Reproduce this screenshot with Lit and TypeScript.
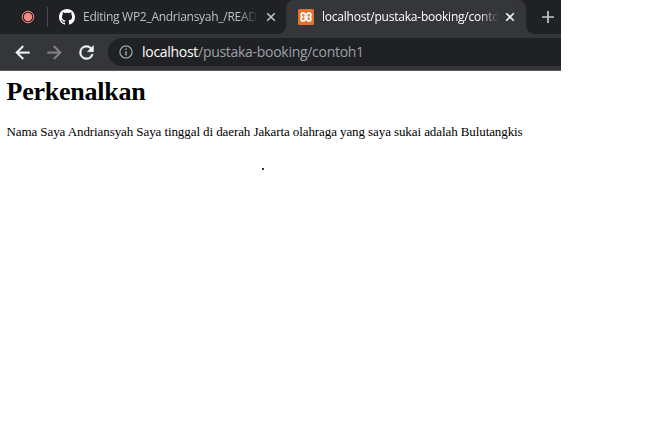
import { LitElement, html, css, svg } from "lit";
import { customElement } from "lit/decorators.js";

const close = html`<svg class="close" width="10" height="10" viewBox="0 0 10 10">
  <path d="M1.2 1.2 8.8 8.8M8.8 1.2 1.2 8.8" fill="none" stroke="currentColor" stroke-width="1.6" />
</svg>`;

const arrow = svg`<path d="M20 11H7.83l5.59-5.59L12 4l-8 8 8 8 1.41-1.41L7.83 13H20v-2z" fill="currentColor" stroke="currentColor" stroke-width=".4"/>`;

@customElement("browser-tabs")
class BrowserTabs extends LitElement {
  static styles = css`
    :host { display: flex; height: 34px; background: #202124; font: 12px/34px "Open Sans", "Noto Sans", sans-serif; color: #bdc1c6; }
    svg { display: block; flex: none; }
    .pinned { width: 47px; display: flex; align-items: center; box-sizing: border-box; padding-left: 21px; }
    .divider { width: 1px; height: 20px; margin-top: 7px; background: #4a4c50; flex: none; }
    .tab { display: flex; align-items: center; box-sizing: border-box; flex: none; }
    .idle { width: 238px; padding-left: 11px; }
    .active { position: relative; width: 240px; padding-left: 12px; background: #35363a; border-radius: 8px 8px 0 0; color: #fff; }
    .active::before, .active::after { content: ""; position: absolute; bottom: 0; width: 8px; height: 8px; }
    .active::before { left: -8px; background: radial-gradient(circle at 0 0, #202124 7.5px, #35363a 8px); }
    .active::after { right: -8px; background: radial-gradient(circle at 100% 0, #202124 7.5px, #35363a 8px); }
    .title { white-space: nowrap; overflow: hidden; flex: none; -webkit-mask-image: linear-gradient(90deg, #000 calc(100% - 20px), transparent); }
    .idle .title { width: 175px; margin-left: 8px; letter-spacing: -0.28px; }
    .active .title { width: 177px; margin-left: 8px; letter-spacing: -0.22px; }
    .close { margin-left: 8px; }
    .active .close { margin-left: 6px; color: #f1f3f4; }
    .add { margin: 11px 0 0 16px; }
  `;
  render() {
    return html`
      <div class="pinned">
        <svg width="14" height="14" viewBox="0 0 14 14">
          <circle cx="7" cy="7" r="5.8" fill="none" stroke="#f28b82" stroke-width="1" />
          <circle cx="7" cy="7" r="4.2" fill="#f28b82" />
        </svg>
      </div>
      <div class="divider"></div>
      <div class="tab idle">
        <svg width="16" height="16" viewBox="0 0 16 16"><path fill="#fff" d="M8 0C3.58 0 0 3.58 0 8c0 3.54 2.29 6.53 5.47 7.59.4.07.55-.17.55-.38 0-.19-.01-.82-.01-1.49-2.01.37-2.53-.49-2.69-.94-.09-.23-.48-.94-.82-1.13-.28-.15-.68-.52-.01-.53.63-.01 1.08.58 1.23.82.72 1.21 1.87.87 2.33.66.07-.52.28-.87.51-1.07-1.78-.2-3.64-.89-3.64-3.95 0-.87.31-1.59.82-2.15-.08-.2-.36-1.02.08-2.12 0 0 .67-.21 2.2.82.64-.18 1.32-.27 2-.27s1.36.09 2 .27c1.53-1.04 2.2-.82 2.2-.82.44 1.1.16 1.92.08 2.12.51.56.82 1.27.82 2.15 0 3.07-1.87 3.75-3.65 3.95.29.25.54.73.54 1.48 0 1.07-.01 1.93-.01 2.2 0 .21.15.46.55.38A8.01 8.01 0 0 0 16 8c0-4.42-3.58-8-8-8z" /></svg>
        <span class="title">Editing WP2_Andriansyah_/README</span>
        ${close}
      </div>
      <div class="tab active">
        <svg width="16" height="16" viewBox="0 0 16 16">
          <rect width="16" height="16" rx="1.5" fill="#e8702a" />
          <path d="M5.200 4C7 4 7.200 6 8 6S9 4 10.800 4C13.200 4 13.500 6.800 12 8c1.500 1.200 1.200 4-1.200 4C9 12 8.800 10 8 10S7 12 5.200 12C2.800 12 2.500 9.200 4 8 2.500 6.800 2.800 4 5.200 4z" fill="none" stroke="#fff" stroke-width="1.800" />
          <path d="M5.600 6.700 10.400 9.300M10.400 6.700 5.600 9.300" stroke="#fff" stroke-width="1.200" />
        </svg>
        <span class="title">localhost/pustaka-booking/contoh1</span>
        ${close}
      </div>
      <svg class="add" width="12" height="12" viewBox="0 0 12 12"><path d="M6 0V12M0 6H12" stroke="#c5c7ca" stroke-width="1.700" /></svg>
    `;
  }
}

@customElement("browser-toolbar")
class BrowserToolbar extends LitElement {
  static styles = css`
    :host { display: flex; align-items: center; height: 37px; box-sizing: border-box; padding-left: 11.5px; background: #35363a; border-bottom: 1px solid #5a585c; color: #f1f3f4; }
    svg { display: block; flex: none; }
    .nav { display: flex; gap: 11px; width: 96.5px; }
    .forward { transform: scaleX(-1); color: #828387; }
    .address { flex: 1; height: 28px; display: flex; align-items: center; box-sizing: border-box; padding-left: 11px; border-radius: 14px 0 0 14px; background: #202124; font: 14px/28px "Open Sans", "Noto Sans", sans-serif; color: #9aa0a6; white-space: nowrap; }
    .url { margin-left: 9px; letter-spacing: -0.29px; }
    .host { color: #fff; }
  `;
  render() {
    return html`
      <div class="nav">
        <svg width="21" height="21" viewBox="0 0 24 24">${arrow}</svg>
        <svg class="forward" width="21" height="21" viewBox="0 0 24 24">${arrow}</svg>
        <svg width="21" height="21" viewBox="0 0 24 24"><path d="M17.650 6.350A7.960 7.960 0 0 0 12 4a8 8 0 1 0 7.730 10h-2.080A6 6 0 1 1 12 6c1.660 0 3.140.69 4.220 1.780L13 11h7V4l-2.350 2.350z" fill="currentColor" stroke="currentColor" stroke-width=".5" /></svg>
      </div>
      <div class="address">
        <svg width="14" height="14" viewBox="0 0 14 14"><circle cx="7" cy="7" r="6.100" fill="none" stroke="#9aa0a6" stroke-width="1.300" /><path d="M7 6.200V10.400M7 3.500V5" stroke="#9aa0a6" stroke-width="1.500" /></svg>
        <span class="url"><span class="host">localhost</span>/pustaka-booking/contoh1</span>
      </div>
    `;
  }
}

@customElement("app-root")
class AppRoot extends LitElement {
  static styles = css`
    :host { display: block; height: 425px; background: #fff; overflow: hidden; }
    .browser { width: 561px; }
    .page { padding: 6px 0 0 6.5px; color: #000; font-family: "Liberation Serif", "Times New Roman", serif; }
    h1 { margin: 0; font-size: 26px; line-height: 30px; letter-spacing: -0.24px; }
    p { margin: 17px 0 0; font-size: 13px; line-height: 16px; letter-spacing: -0.088px; white-space: nowrap; }
    .mark { width: 2px; height: 2px; margin: 28px 0 0 255.5px; background: #333; }
  `;
  render() {
    return html`
      <div class="browser">
        <browser-tabs></browser-tabs>
        <browser-toolbar></browser-toolbar>
        <div class="page">
          <h1>Perkenalkan</h1>
          <p>Nama Saya Andriansyah Saya tinggal di daerah Jakarta olahraga yang saya sukai adalah Bulutangkis</p>
          <div class="mark"></div>
        </div>
      </div>
    `;
  }
}
